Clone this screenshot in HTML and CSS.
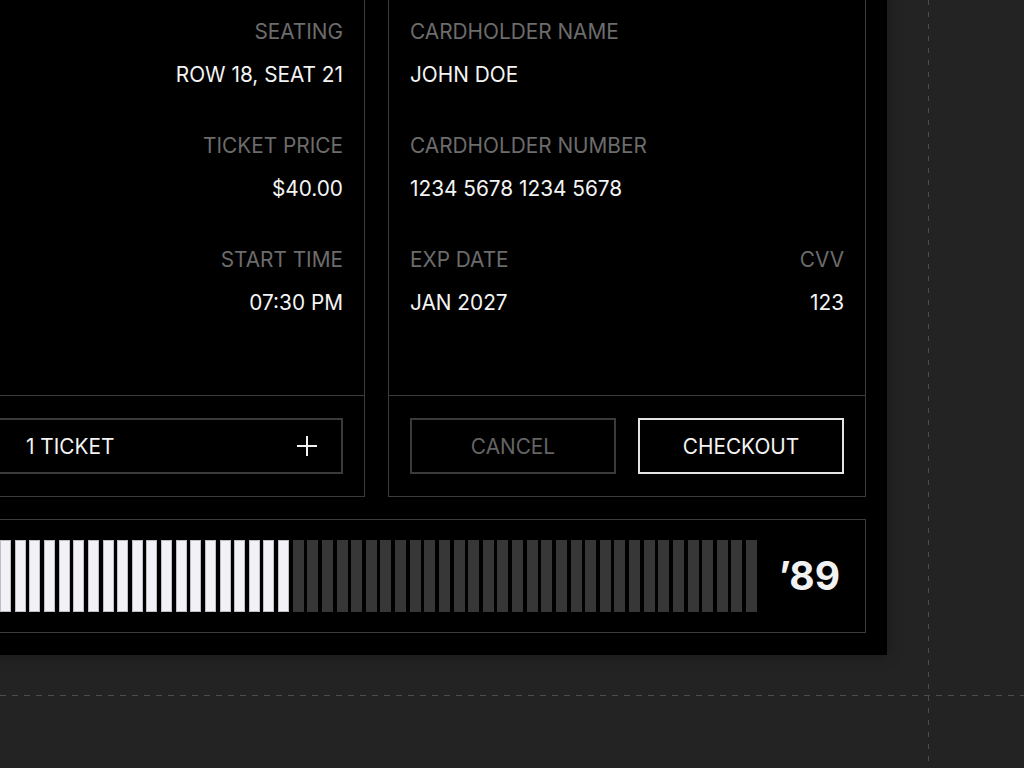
FILE: index.html
```html
<!DOCTYPE html>
<html lang="en">
<head>
    <meta charset="UTF-8">
    <meta name="viewport" content="width=device-width, initial-scale=1.0">
    <title>Checkout</title>
    <link rel="stylesheet" href="styles.css">
</head>
<body>
    <div class="stage">
        <div class="guide guide-v"></div>
        <div class="guide guide-h"></div>

        <div class="card">
            <!-- Ticket details -->
            <section class="panel">
                <div class="panel-body fields align-right">
                    <div class="field">
                        <span class="label">SEATING</span>
                        <span class="value">ROW 18, SEAT 21</span>
                    </div>
                    <div class="field">
                        <span class="label">TICKET PRICE</span>
                        <span class="value">$40.00</span>
                    </div>
                    <div class="field">
                        <span class="label">START TIME</span>
                        <span class="value">07:30 PM</span>
                    </div>
                </div>
                <div class="panel-foot">
                    <button class="btn ticket-btn" type="button">
                        <span>1 TICKET</span>
                        <svg class="plus" width="20" height="20" viewBox="0 0 20 20" aria-hidden="true">
                            <path d="M10 0v20M0 10h20" stroke="#f2f2f2" stroke-width="2" fill="none"/>
                        </svg>
                    </button>
                </div>
            </section>

            <!-- Payment details -->
            <section class="panel">
                <div class="panel-body fields">
                    <div class="field">
                        <span class="label">CARDHOLDER NAME</span>
                        <span class="value">JOHN DOE</span>
                    </div>
                    <div class="field">
                        <span class="label">CARDHOLDER NUMBER</span>
                        <span class="value">1234 5678 1234 5678</span>
                    </div>
                    <div class="field-row">
                        <div class="field">
                            <span class="label">EXP DATE</span>
                            <span class="value">JAN 2027</span>
                        </div>
                        <div class="field align-right">
                            <span class="label">CVV</span>
                            <span class="value">123</span>
                        </div>
                    </div>
                </div>
                <div class="panel-foot actions">
                    <button class="btn btn-muted" type="button">CANCEL</button>
                    <button class="btn btn-primary" type="button">CHECKOUT</button>
                </div>
            </section>

            <!-- Progress strip -->
            <section class="panel progress">
                <div class="bars">
                    <span class="bar on"></span><span class="bar on"></span><span class="bar on"></span><span class="bar on"></span>
                    <span class="bar on"></span><span class="bar on"></span><span class="bar on"></span><span class="bar on"></span>
                    <span class="bar on"></span><span class="bar on"></span><span class="bar on"></span><span class="bar on"></span>
                    <span class="bar on"></span><span class="bar on"></span><span class="bar on"></span><span class="bar on"></span>
                    <span class="bar on"></span><span class="bar on"></span><span class="bar on"></span><span class="bar on"></span>
                    <span class="bar on"></span><span class="bar on"></span><span class="bar on"></span><span class="bar on"></span>
                    <span class="bar on"></span><span class="bar on"></span>
                    <span class="bar"></span><span class="bar"></span><span class="bar"></span><span class="bar"></span>
                    <span class="bar"></span><span class="bar"></span><span class="bar"></span><span class="bar"></span>
                    <span class="bar"></span><span class="bar"></span><span class="bar"></span><span class="bar"></span>
                    <span class="bar"></span><span class="bar"></span><span class="bar"></span><span class="bar"></span>
                    <span class="bar"></span><span class="bar"></span><span class="bar"></span><span class="bar"></span>
                    <span class="bar"></span><span class="bar"></span><span class="bar"></span><span class="bar"></span>
                    <span class="bar"></span><span class="bar"></span><span class="bar"></span><span class="bar"></span>
                    <span class="bar"></span><span class="bar"></span><span class="bar"></span><span class="bar"></span>
                </div>
                <div class="year">&rsquo;89</div>
            </section>
        </div>
    </div>
</body>
</html>
```

FILE: styles.css
```css
/* General Reset and Styling */
body {
    margin: 0;
    background-color: #232323;
    font-family: 'Inter', 'Noto Sans', sans-serif;
    color: #f0f0f0;
}

.stage {
    position: relative;
    height: 768px;
    overflow: hidden;
}

/* Dashed guide lines */
.guide {
    position: absolute;
}

.guide-v {
    left: 928px;
    top: 0;
    bottom: 0;
    width: 1px;
    background: repeating-linear-gradient(to bottom, #4c4c4c 0 5px, transparent 5px 12px);
}

.guide-h {
    top: 695px;
    left: 0;
    right: 0;
    height: 1px;
    background: repeating-linear-gradient(to right, #4c4c4c 0 6px, transparent 6px 12px);
}

/* Card */
.card {
    display: grid;
    grid-template-columns: 478px 478px;
    column-gap: 23px;
    row-gap: 22px;
    width: max-content;
    margin: -26px 0 0 -135px;
    padding: 22px 21px 22px 22px;
    background: #000;
    box-shadow: 0 0 14px rgba(0, 0, 0, 0.35);
}

.panel {
    border: 1px solid #3c3c3c;
    display: flex;
    flex-direction: column;
}

.panel-body {
    box-sizing: border-box;
    height: 398px;
    padding: 23px 21px 22px;
}

.panel-foot {
    border-top: 1px solid #3c3c3c;
    padding: 22px 21px;
}

/* Fields */
.fields {
    display: flex;
    flex-direction: column;
    gap: 47px;
}

.field {
    display: flex;
    flex-direction: column;
    gap: 19px;
}

.field-row {
    display: flex;
    justify-content: space-between;
}

.align-right,
.align-right .field {
    text-align: right;
}

.label,
.value {
    font-size: 20.8px;
    line-height: 24px;
}

.label {
    color: #6c6c6c;
}

.value {
    color: #f4f4f4;
}

/* Buttons */
.btn {
    box-sizing: border-box;
    height: 56px;
    background: #000;
    border: 2px solid #3a3a3a;
    font-family: inherit;
    font-size: 20.8px;
    color: #f4f4f4;
    cursor: pointer;
}

.ticket-btn {
    display: flex;
    align-items: center;
    justify-content: space-between;
    width: 100%;
    padding: 0 24px 0 115px;
}

.plus {
    display: block;
}

.actions {
    display: grid;
    grid-template-columns: 1fr 1fr;
    gap: 22px;
}

.btn-muted {
    color: #646464;
}

.btn-primary {
    border-color: #e4e4e4;
}

/* Progress strip */
.progress {
    grid-column: 1 / -1;
    flex-direction: row;
    align-items: center;
    padding: 20px;
}

.bars {
    flex: 1;
    display: flex;
    justify-content: flex-end;
    gap: 3.63px;
    overflow: hidden;
}

.bar {
    flex: 0 0 11px;
    height: 72px;
    background: #373737;
}

.bar.on {
    background: #f2f2f6;
    box-shadow: inset 0 0 0 1px #bdbdc2;
}

.year {
    box-sizing: border-box;
    flex: 0 0 88px;
    padding-right: 5px;
    text-align: right;
    font-size: 39px;
    font-weight: 700;
    line-height: 44px;
    color: #f2f2f2;
}
```
